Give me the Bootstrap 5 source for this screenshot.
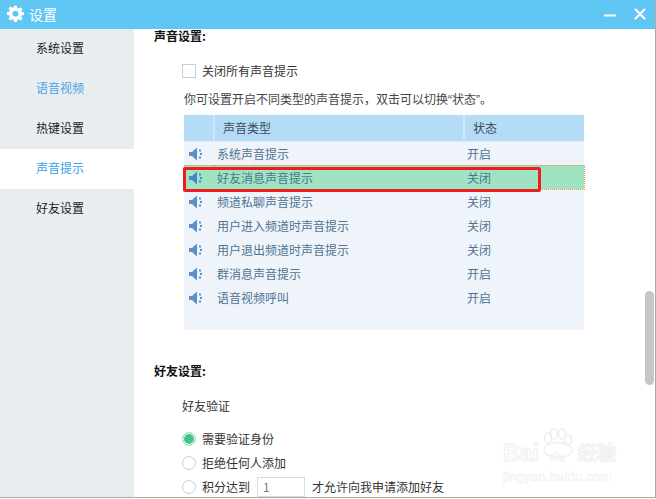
<!DOCTYPE html>
<html lang="zh"><head><meta charset="utf-8"><title>设置</title>
<link href="https://cdn.jsdelivr.net/npm/bootstrap@5.3.0/dist/css/bootstrap.min.css" rel="stylesheet">
<style>
html,body{margin:0;height:499px;overflow:hidden;background:#fff}
body{font:12px/18px "Noto Sans CJK SC","Liberation Sans",sans-serif;color:#333}
.win{width:656px;height:498px;border-right:1px solid #a9a9a9;border-bottom:1px solid #a9a9a9;position:relative;overflow:hidden}
.titlebar{height:29px;background:#60c6f4;color:#fff;font-size:14px;padding:0 9px 2px 7px;flex:none}
.ttl{margin-left:5px}
.side{width:134px;background:#e8edf0;flex:none}
.sitem{height:40px;padding:0 0 2px 36px;color:#1c1c1c}
.sitem.blue{color:#4aa3e2}
.sitem.on{background:#fff;color:#3a9fe6}
.pane{padding-left:20px;min-width:0}
.pane-in{margin-top:-2px}
.hd{font-weight:700;color:#111;height:18px}
.ind{margin-left:28px}
.cb{width:14px;height:14px;border:1px solid #c3ced6;background:#fff;flex:none}
.rd{width:14px;height:14px;border:1px solid #c0d0da;border-radius:50%;background:#fff;flex:none}
.rd.sel{border-color:#a8e3c8;background:#3fc68c;box-shadow:inset 0 0 0 1px #fff}
.rw{height:18px;gap:6px}
.inp{width:48px;height:20px;border:1px solid #d6dde2;color:#777;padding-left:5px;line-height:18px;margin:0 1px}
.para{margin:10px 0 0 30px;color:#444;height:18px}
.qt{font-family:"Liberation Sans",sans-serif}
.tblwrap{width:400px;height:215px;background:#eff4fb;position:relative;margin:7px 0 0 30px}
.snd{width:400px;border-collapse:collapse;table-layout:fixed;color:#4f7390}
.snd th{height:26px;background:#b5dcf7;font-weight:400;color:#3a4a55;border-left:2px solid #cfe6f9;border-bottom:1px solid #e0eefa;padding:0 0 0 8px}
.snd th:first-child{border-left:0}
.snd td{height:24px;padding:1px 0 0 3px;vertical-align:middle}
.snd td:first-child{padding:1px 0 0 5px}
.snd td svg{display:block}
.snd tr.pick td{background:#9fe3c3;border-top:1px dotted #e8944e;border-bottom:1px dotted #e8944e}
.snd tr.pick td:last-child{border-right:1px dotted #e8944e}
.redbox{position:absolute;left:-1px;top:52px;width:358px;height:25px;border:3px solid #ee1c1c;border-radius:2px}
.thumb{position:absolute;left:645px;top:291px;width:9px;height:94px;background:#c6c6c6;border-radius:5px}
.wm{position:absolute;left:500px;top:426px;width:122px;height:60px;color:transparent;-webkit-text-stroke:1px #eeeeee;pointer-events:none}
.wm-a{position:absolute;left:3px;top:15px;font:700 23px/24px "Liberation Sans",sans-serif}
.wm-b{position:absolute;left:49px;top:24px;font:700 13px/14px "Liberation Sans",sans-serif;-webkit-text-stroke:.5px #eeeeee}
.wm-c{position:absolute;left:78px;top:14px;font:700 19px/24px "Noto Sans CJK SC",sans-serif}
.wm-d{position:absolute;left:3px;top:43px;font:13.5px/16px "Liberation Sans",sans-serif;-webkit-text-stroke:.5px #eeeeee}
.wm svg{position:absolute;left:40px;top:2px}
</style></head><body>
<div class="win d-flex flex-column">
  <div class="titlebar d-flex align-items-center">
    <svg width="17" height="17" viewBox="0 0 24 24"><path fill="#fff" fill-rule="evenodd" d="M10 1h4l.6 3.1 1.9.8 2.6-1.800 2.800 2.800-1.800 2.600.8 1.900L24 10v4l-3.100.6-.8 1.900 1.800 2.600-2.800 2.800-2.600-1.800-1.900.8L14 24h-4l-.6-3.100-1.900-.8-2.600 1.800-2.800-2.800 1.800-2.600-.8-1.900L0 14v-4l3.100-.6.8-1.900L2.100 4.900l2.800-2.800 2.600 1.800 1.900-.8zM12 8a4.200 4.200 0 1 0 0 8.400A4.200 4.200 0 0 0 12 8z"/></svg>
    <span class="ttl">设置</span>
    <svg class="ms-auto" width="42" height="14" viewBox="0 0 42 14"><path d="M0 8.500h12" stroke="#fff" stroke-width="2"/><path d="M31 2l10 10M41 2L31 12" stroke="#fff" stroke-width="2.200"/></svg>
  </div>
  <div class="d-flex flex-grow-1" style="min-height:0">
    <div class="side">
      <div class="sitem d-flex align-items-center">系统设置</div>
      <div class="sitem blue d-flex align-items-center">语音视频</div>
      <div class="sitem d-flex align-items-center">热键设置</div>
      <div class="sitem on d-flex align-items-center">声音提示</div>
      <div class="sitem d-flex align-items-center">好友设置</div>
    </div>
    <div class="pane flex-grow-1">
      <div class="pane-in">
        <div class="hd">声音设置:</div>
        <div class="ind d-flex align-items-center rw" style="margin-top:17px"><span class="cb"></span>关闭所有声音提示</div>
        <div class="para">你可设置开启不同类型的声音提示，双击可以切换<span class="qt">“</span>状态<span class="qt">”</span>。</div>
        <div class="tblwrap">
          <table class="snd">
            <colgroup><col style="width:30px"><col style="width:250px"><col style="width:120px"></colgroup>
            <thead><tr><th></th><th>声音类型</th><th>状态</th></tr></thead>
            <tbody>
              <tr><td><svg width="14" height="14" viewBox="0 0 14 14"><path fill="#5a8fc8" d="M0 5h3l5-4.500v13L3 9H0z"/><path fill="#5a8fc8" d="M10 2.500h2v2h-2zM11 6h2v2h-2zM10 9.500h2v2h-2z"/></svg></td><td>系统声音提示</td><td>开启</td></tr>
              <tr class="pick"><td><svg width="14" height="14" viewBox="0 0 14 14"><path fill="#4a86cc" d="M0 5h3l5-4.500v13L3 9H0z"/><path fill="#4a86cc" d="M10 2.500h2v2h-2zM11 6h2v2h-2zM10 9.500h2v2h-2z"/></svg></td><td>好友消息声音提示</td><td>关闭</td></tr>
              <tr><td><svg width="14" height="14" viewBox="0 0 14 14"><path fill="#5a8fc8" d="M0 5h3l5-4.500v13L3 9H0z"/><path fill="#5a8fc8" d="M10 2.500h2v2h-2zM11 6h2v2h-2zM10 9.500h2v2h-2z"/></svg></td><td>频道私聊声音提示</td><td>关闭</td></tr>
              <tr><td><svg width="14" height="14" viewBox="0 0 14 14"><path fill="#5a8fc8" d="M0 5h3l5-4.500v13L3 9H0z"/><path fill="#5a8fc8" d="M10 2.500h2v2h-2zM11 6h2v2h-2zM10 9.500h2v2h-2z"/></svg></td><td>用户进入频道时声音提示</td><td>关闭</td></tr>
              <tr><td><svg width="14" height="14" viewBox="0 0 14 14"><path fill="#5a8fc8" d="M0 5h3l5-4.500v13L3 9H0z"/><path fill="#5a8fc8" d="M10 2.500h2v2h-2zM11 6h2v2h-2zM10 9.500h2v2h-2z"/></svg></td><td>用户退出频道时声音提示</td><td>关闭</td></tr>
              <tr><td><svg width="14" height="14" viewBox="0 0 14 14"><path fill="#5a8fc8" d="M0 5h3l5-4.500v13L3 9H0z"/><path fill="#5a8fc8" d="M10 2.500h2v2h-2zM11 6h2v2h-2zM10 9.500h2v2h-2z"/></svg></td><td>群消息声音提示</td><td>开启</td></tr>
              <tr><td><svg width="14" height="14" viewBox="0 0 14 14"><path fill="#5a8fc8" d="M0 5h3l5-4.500v13L3 9H0z"/><path fill="#5a8fc8" d="M10 2.500h2v2h-2zM11 6h2v2h-2zM10 9.500h2v2h-2z"/></svg></td><td>语音视频呼叫</td><td>开启</td></tr>
            </tbody>
          </table>
          <div class="redbox"></div>
        </div>
        <div class="hd" style="margin-top:32px">好友设置:</div>
        <div style="margin:17px 0 0 28px">好友验证</div>
        <div class="ind d-flex align-items-center rw" style="margin-top:15px"><span class="rd sel"></span>需要验证身份</div>
        <div class="ind d-flex align-items-center rw" style="margin-top:6px"><span class="rd"></span>拒绝任何人添加</div>
        <div class="ind d-flex align-items-center rw" style="margin-top:6px"><span class="rd"></span>积分达到<span class="inp">1</span>才允许向我申请添加好友</div>
      </div>
    </div>
  </div>
  <div class="thumb"></div>
  <div class="wm">
    <svg width="36" height="30" viewBox="0 0 36 30"><g fill="none" stroke="#eeeeee" stroke-width="1.500"><ellipse cx="8" cy="10" rx="3.500" ry="5"/><ellipse cx="14" cy="6" rx="3.500" ry="5"/><ellipse cx="22" cy="6" rx="3.500" ry="5"/><ellipse cx="28" cy="12" rx="3.500" ry="5"/><ellipse cx="18" cy="22" rx="14" ry="7.500"/></g></svg>
    <span class="wm-a">Bai</span><span class="wm-b">du</span><span class="wm-c">经验</span><span class="wm-d">jingyan.baidu.com</span>
  </div>
</div>
</body></html>
